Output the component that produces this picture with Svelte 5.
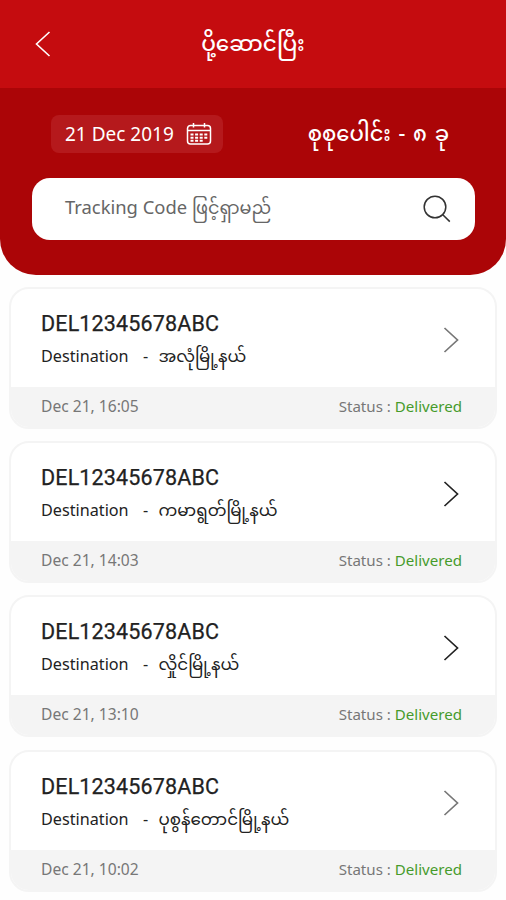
<script lang="ts">
  interface Delivery {
    code: string
    destination: string
    time: string
    muted: boolean
  }

  const deliveries: Delivery[] = [
    { code: 'DEL12345678ABC', destination: 'အလုံမြို့နယ်', time: 'Dec 21, 16:05', muted: true },
    { code: 'DEL12345678ABC', destination: 'ကမာရွတ်မြို့နယ်', time: 'Dec 21, 14:03', muted: false },
    { code: 'DEL12345678ABC', destination: 'လှိုင်မြို့နယ်', time: 'Dec 21, 13:10', muted: false },
    { code: 'DEL12345678ABC', destination: 'ပုစွန်တောင်မြို့နယ်', time: 'Dec 21, 10:02', muted: true }
  ]
</script>

<main>
  <header>
    <button class="back" aria-label="Back">
      <svg width="16" height="28" viewBox="0 0 16 28">
        <path d="M14.5 2 1.5 14l13 12" />
      </svg>
    </button>
    <h1>ပို့ဆောင်ပြီး</h1>
  </header>

  <section class="panel">
    <div class="summary">
      <button class="date">
        <span>21 Dec 2019</span>
        <svg width="26" height="24" viewBox="0 0 26 24">
          <rect x="1.5" y="3.5" width="23" height="18.5" rx="3" />
          <path d="M1.5 8.5h23M7.5 1v4.5M18.5 1v4.5" />
          <path class="days" d="M4.5 12.5h17M4.500 15.700h17M4.500 18.800h13" />
        </svg>
      </button>
      <span class="total">စုစုပေါင်း - ၈ ခု</span>
    </div>
    <div class="search">
      <span class="placeholder">Tracking Code <span class="my">ဖြင့်ရှာမည်</span></span>
      <svg width="28" height="28" viewBox="0 0 28 28">
        <circle cx="12" cy="12" r="10.8" />
        <path d="m19.8 19.8 7 6.8" />
      </svg>
    </div>
  </section>

  <ul>
    {#each deliveries as item}
      <li>
        <div class="body">
          <div>
            <h2>{item.code}</h2>
            <p>
              <span class="label">Destination</span>
              <span class="dash">-</span>
              <span class="my">{item.destination}</span>
            </p>
          </div>
          <svg class:muted={item.muted} width="16" height="28" viewBox="0 0 16 28">
            <path d="m1.5 2 13 12-13 12" />
          </svg>
        </div>
        <div class="foot">
          <time>{item.time}</time>
          <span class="status">Status : <b>Delivered</b></span>
        </div>
      </li>
    {/each}
  </ul>
</main>

<style>
  :global(body) { background: #fefefe; }

  main {
    width: 506px;
    height: 900px;
    overflow: hidden;
    background: #fefefe;
    font-family: 'Noto Sans', 'Noto Sans Myanmar', Padauk, sans-serif;
    white-space: nowrap;
  }

  svg {
    display: block;
    flex: none;
    fill: none;
    stroke: currentColor;
  }

  button {
    border: 0;
    padding: 0;
    background: none;
    color: inherit;
    font: inherit;
  }

  h1, h2, p, ul { margin: 0; padding: 0; }

  header {
    display: grid;
    grid-template-columns: 100px 1fr 100px;
    align-items: center;
    height: 88px;
    background: #c50c0f;
    color: #fff;
  }

  .back { padding-left: 35px; }
  .back svg { stroke-width: 1.6; }

  h1 {
    padding-bottom: 3px;
    text-align: center;
    font-size: 21.5px;
    font-weight: 500;
    line-height: 40px;
  }

  .panel {
    box-sizing: border-box;
    height: 187px;
    padding: 27px 31px 0 32px;
    border-radius: 0 0 36px 36px;
    background: #ab0507;
    color: #fff;
  }

  .summary {
    display: flex;
    justify-content: space-between;
    align-items: center;
    height: 38px;
    padding: 0 26px 0 19px;
  }

  .date {
    box-sizing: border-box;
    display: flex;
    align-items: center;
    justify-content: space-between;
    width: 172px;
    height: 38px;
    padding: 0 11px 0 14px;
    border-radius: 8px;
    background: #b5191c;
    font-size: 19px;
  }

  .date svg { stroke-width: 1.5; }
  .date .days { stroke-width: 2; stroke-dasharray: 3 1.6; }

  .total {
    padding-top: 3px;
    font-size: 21px;
    font-weight: 500;
    word-spacing: 2.3px;
  }

  .search {
    box-sizing: border-box;
    display: flex;
    align-items: center;
    justify-content: space-between;
    height: 62px;
    margin-top: 25px;
    padding: 0 24px 0 33px;
    border-radius: 18px;
    background: #fff;
    color: #333;
  }

  .search svg { stroke-width: 1.5; }

  .placeholder {
    padding-bottom: 5px;
    color: #666;
    font-size: 18.4px;
    line-height: 30px;
  }

  .placeholder .my { font-size: 17.7px; }

  ul {
    display: flex;
    flex-direction: column;
    gap: 12.3px;
    padding: 11.7px 9px 0;
    list-style: none;
  }

  li {
    box-sizing: border-box;
    height: 142px;
    border: 2px solid #f4f4f4;
    border-radius: 20px;
    overflow: hidden;
    background: #fff;
  }

  .body {
    box-sizing: border-box;
    display: flex;
    justify-content: space-between;
    height: 98px;
    padding: 18px 36px 0 30px;
    color: #222;
  }

  .body svg { margin-top: 19px; stroke-width: 1.7; }
  .body svg.muted { color: #777; }

  h2 {
    font-family: Roboto, sans-serif;
    font-size: 21.5px;
    font-weight: 400;
    line-height: 33px;
    letter-spacing: 0.15px;
    -webkit-text-stroke: 0.25px currentColor;
  }

  p {
    display: flex;
    align-items: center;
    height: 32px;
    font-size: 16.2px;
    line-height: 32px;
  }

  p .my { font-size: 16.7px; }

  .label { width: 102px; }
  .dash { width: 15.5px; }

  .foot {
    display: flex;
    justify-content: space-between;
    height: 40px;
    padding: 0 33px 0 30px;
    background: #f4f4f4;
    color: #777;
    font-size: 15.6px;
    line-height: 39px;
  }

  .status { font-size: 15.1px; }

  b { color: #469b2b; font-weight: 400; }
</style>
